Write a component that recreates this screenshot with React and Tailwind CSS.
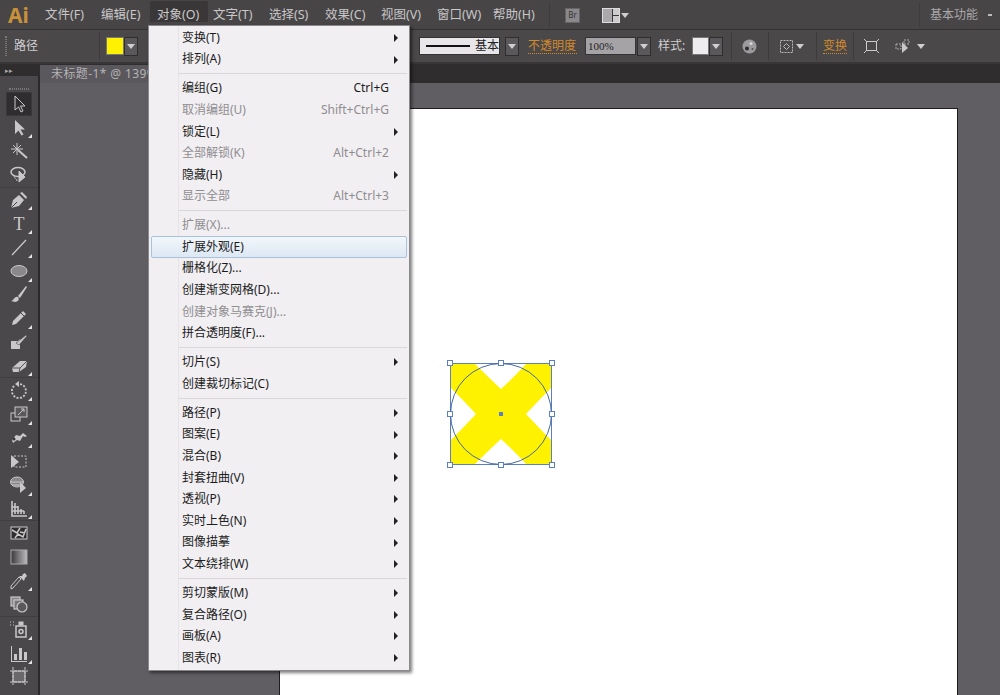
import React from "react";

const font = { fontFamily: '"Noto Sans", "Noto Sans CJK SC", sans-serif' };

const menuBar = ["文件(F)", "编辑(E)", "对象(O)", "文字(T)", "选择(S)", "效果(C)", "视图(V)", "窗口(W)", "帮助(H)"];

// groups of the object menu: [label, shortcut, disabled, submenu]
const groups = [
  [
    ["变换(T)", "", false, true],
    ["排列(A)", "", false, true],
  ],
  [
    ["编组(G)", "Ctrl+G"],
    ["取消编组(U)", "Shift+Ctrl+G", true],
    ["锁定(L)", "", false, true],
    ["全部解锁(K)", "Alt+Ctrl+2", true],
    ["隐藏(H)", "", false, true],
    ["显示全部", "Alt+Ctrl+3", true],
  ],
  [
    ["扩展(X)...", "", true],
    ["扩展外观(E)", "", false, false, true],
    ["栅格化(Z)..."],
    ["创建渐变网格(D)..."],
    ["创建对象马赛克(J)...", "", true],
    ["拼合透明度(F)..."],
  ],
  [
    ["切片(S)", "", false, true],
    ["创建裁切标记(C)"],
  ],
  [
    ["路径(P)", "", false, true],
    ["图案(E)", "", false, true],
    ["混合(B)", "", false, true],
    ["封套扭曲(V)", "", false, true],
    ["透视(P)", "", false, true],
    ["实时上色(N)", "", false, true],
    ["图像描摹", "", false, true],
    ["文本绕排(W)", "", false, true],
  ],
  [
    ["剪切蒙版(M)", "", false, true],
    ["复合路径(O)", "", false, true],
    ["画板(A)", "", false, true],
    ["图表(R)", "", false, true],
  ],
];

function Caret({ className = "" }) {
  return <span className={"block w-0 h-0 border-x-[4px] border-x-transparent border-t-[5px] border-t-[#d0cfd0] " + className} />;
}

function DropBtn({ className = "" }) {
  return (
    <span className={"flex items-center justify-center w-[14px] h-[19px] bg-[#5a585a] border border-[#2f2d2e] " + className}>
      <Caret />
    </span>
  );
}

function Sep({ className = "" }) {
  return <span className={"block w-px h-[28px] bg-[#3d3b3c] " + className} />;
}

function MenuRow({ label, shortcut, disabled, sub, hover }) {
  return (
    <div
      className={
        "relative flex items-center h-[21.6px] pl-[33px] pr-[20px] text-[12px] " +
        (disabled ? "text-[#8f8d90] " : "text-[#1c1c1c] ") +
        (hover ? "mx-[2px] !pl-[30px] !pr-[18px] rounded-[2px] border border-[#a9c2dc] bg-gradient-to-b from-[#f2f6fb] to-[#dde8f4]" : "")
      }
    >
      <span>{label}</span>
      {shortcut && <span className="ml-auto">{shortcut}</span>}
      {sub && <span className="absolute right-[11px] top-[7px] w-0 h-0 border-y-[4px] border-y-transparent border-l-[4px] border-l-[#222]" />}
    </div>
  );
}

function ObjectMenu() {
  return (
    <div className="absolute left-[148px] top-[25px] w-[262px] h-[646px] pt-[1px] bg-[#f1eff2] border border-[#8b898b] shadow-[2px_2px_3px_rgba(0,0,0,0.5)] z-10">
      <div className="absolute left-[29px] top-0 bottom-0 w-px bg-[#e6e4e7]" />
      {groups.map((g, i) => (
        <div key={i}>
          {i > 0 && <div className="ml-[30px] mr-[2px] my-[3.2px] h-px bg-[#d9d7da]" />}
          {g.map((r) => (
            <MenuRow key={r[0]} label={r[0]} shortcut={r[1]} disabled={r[2]} sub={r[3]} hover={r[4]} />
          ))}
        </div>
      ))}
    </div>
  );
}

const S = "#c9c7c9";
const tools = [
  [<path d="M6 2v14l3.5-3 2.500 5 2-1-2.500-5H16z" fill="none" stroke={S} />, 0, 1],
  [<path d="M6 2v14l3.500-3.500 3 5 2-1-3-5H16z" fill={S} />, 1],
  [<g stroke={S} fill="none"><path d="M9 9l9 8" strokeWidth="2" /><path d="M8 2v12M2 8h12M4 4l8 8M12 4l-8 8" /></g>, 0],
  [<g fill="none" stroke={S}><ellipse cx="9" cy="7" rx="7" ry="4.500" strokeWidth="1.500" /><path d="M5 10c0 4 3 3 3 6" /><path d="M10 6v11l6-5z" fill={S} /></g>, 0],
  [<g><path d="M2 18l2-8 6-5 5 5-5 6z" fill={S} /><path d="M2 18l6-6" stroke="#444" /><path d="M11 3l2-1 5 5-1 2z" fill={S} /></g>, 1],
  [<text x="10" y="17" textAnchor="middle" fontSize="18" fontFamily="Liberation Serif, serif" fill={S}>T</text>, 1],
  [<path d="M3 18L17 3" stroke={S} strokeWidth="1.300" />, 1],
  [<ellipse cx="10" cy="10" rx="8" ry="5.500" fill="#8a888b" stroke={S} />, 1],
  [<g fill={S}><path d="M9 12L17 2l1 1-7 11z" /><path d="M2 17c3 0 3-5 7-4 2 2 0 5-3 5z" /></g>, 0],
  [<g><path d="M3 17l1-4L14 3l3 3L7 16z" fill={S} /><path d="M12 5l3 3" stroke="#444" /></g>, 1],
  [<g fill={S}><path d="M2 9h7l2-2v10H2z" /><path d="M7 11l10-8 1 1-8 9z" stroke="#444" strokeWidth=".6" /></g>, 0],
  [<g><path d="M3 13l8-7h7l-1 6-7 5H4z" fill={S} /><path d="M3 13h8l7-7M11 13l-1 4" stroke="#555" fill="none" /></g>, 1],
  [<g fill="none" stroke={S} strokeWidth="1.800"><path d="M5 6a7 7 0 1 0 5-2" strokeDasharray="2 1.500" /><path d="M10 1v6l-4-3z" fill={S} stroke="none" /></g>, 1],
  [<g fill="none" stroke={S}><rect x="2" y="9" width="9" height="8" /><rect x="6" y="3" width="12" height="10" fill="#5a585b" /><path d="M9 11l6-6M12 5h3v3" /></g>, 1],
  [<g><path d="M4 16l-1-3 4-5 4 1 3-3 4 3-2 1-2-1-3 5-3-1z" fill={S} /><circle cx="5" cy="12" r="1.500" fill="#333" /></g>, 1],
  [<g fill="none" stroke={S}><rect x="5" y="5" width="12" height="11" strokeDasharray="2 1.500" /><path d="M2 4v13l8-6z" fill={S} stroke="none" /></g>, 0],
  [<g><ellipse cx="8" cy="7" rx="6.500" ry="5" fill="#8a888b" stroke={S} /><path d="M2 7h12M3 10h10" stroke={S} /><path d="M11 7v11l6-5z" fill={S} /></g>, 1],
  [<g fill="none" stroke={S} strokeWidth="1.600"><path d="M3 2v15h15" /><path d="M6 4v11M9 7v8M12 10v5M15 12v3M3 8h6M3 12h12" /></g>, 1],
  [<g><rect x="2" y="4" width="16" height="12" fill="#2f2d2e" stroke={S} /><path d="M3 7l5 3 3-5M6 15l3-4 5 3 3-8M11 9l5 1" stroke={S} strokeWidth="1.500" fill="none" /></g>, 0],
  [<g><defs><linearGradient id="gr" x1="0" x2="1"><stop stopColor="#3a383a" /><stop offset="1" stopColor="#bdbbbd" /></linearGradient></defs><rect x="2" y="3" width="16" height="14" fill="url(#gr)" stroke="#aaa" /></g>, 0],
  [<g><path d="M2 18l2-1 8-9-2-2-8 9z" fill="none" stroke={S} /><path d="M10 5l5 5 1-3 2-2-2-3-2 1-1 2z" fill={S} /></g>, 1],
  [<g fill="none" stroke={S} strokeWidth="1.200"><rect x="2" y="3" width="9" height="9" fill="#8a888b" /><rect x="5" y="6" width="9" height="9" fill="#77757a" /><circle cx="13" cy="13" r="5" fill="#5a585b" /></g>, 0],
  [<g fill="none" stroke={S}><rect x="7" y="7" width="10" height="11" strokeWidth="1.500" /><rect x="10" y="3" width="4" height="3" fill={S} /><circle cx="12" cy="12.500" r="2" strokeWidth="1.500" /><path d="M1 3h1M4 3h1M1 6h1M4 6h1" /></g>, 1],
  [<g fill={S}><path d="M2 3h1v15h15v1H2z" /><rect x="5" y="11" width="3" height="6" /><rect x="10" y="5" width="3" height="12" /><rect x="15" y="9" width="3" height="8" /></g>, 1],
  [<g><rect x="4" y="5" width="12" height="11" fill="#6a686b" stroke={S} /><path d="M1 5h18M1 16h18M4 1v18M16 1v18" stroke={S} strokeDasharray="3 1" /></g>, 0],
];

const breaks = new Set([4, 12, 18, 22]);

function ToolBar() {
  return (
    <div className="relative flex-1 min-h-0 bg-[#4a484b] border-r-[2px] border-[#2b292a] pt-[12px] overflow-hidden">
      <div className="mx-[9px] mb-[2px] h-[2px] border-y border-dotted border-[#777]" />
      {tools.map(([icon, corner, active], i) => (
        <div key={i} className={breaks.has(i) ? "border-t border-[#403e41]" : ""}>
          <div className={"relative mx-[6px] flex items-center justify-center h-[23.7px] " + (active ? "bg-[#2f2d2f] border border-[#3a383a]" : "")}>
            <svg width="20" height="20" viewBox="0 0 20 20">{icon}</svg>
            {corner === 1 && <span className="absolute right-0 bottom-[1px] w-0 h-0 border-l-[4px] border-l-transparent border-b-[4px] border-b-[#e4e2e4]" />}
          </div>
        </div>
      ))}
    </div>
  );
}

function Handle({ className }) {
  return <span className={"absolute w-[6px] h-[6px] bg-white border border-[#5b7fc0] " + className} />;
}

function Art() {
  return (
    <div className="absolute left-[170px] top-[254px] w-[102px] h-[102px]">
      <svg width="102" height="102" viewBox="0 0 102 102" className="block">
        <rect x="0.5" y="0.5" width="101" height="101" fill="#fff200" />
        <path d="M24 0Q38 14 51 26 64 14 77 0ZM102 24Q88 38 76 51 88 64 102 78ZM24 102Q38 88 51 76 64 88 77 102ZM0 24Q14 38 26 51 14 64 0 78Z" fill="#fff" />
        <rect x="0.5" y="0.5" width="101" height="101" fill="none" stroke="#5b7fc0" />
        <circle cx="51" cy="51" r="50.500" fill="none" stroke="#45689f" />
        <rect x="49" y="49" width="4" height="4" fill="#5b7fc0" />
      </svg>
      <Handle className="-left-[3px] -top-[3px]" />
      <Handle className="left-[48px] -top-[3px]" />
      <Handle className="-right-[3px] -top-[3px]" />
      <Handle className="-left-[3px] top-[48px]" />
      <Handle className="-right-[3px] top-[48px]" />
      <Handle className="-left-[3px] -bottom-[3px]" />
      <Handle className="left-[48px] -bottom-[3px]" />
      <Handle className="-right-[3px] -bottom-[3px]" />
    </div>
  );
}

export default function App() {
  return (
    <div style={font} className="relative flex flex-col w-[1000px] h-[695px] overflow-hidden bg-[#605e62] text-[12px] text-[#c9c7c9]">
      {/* menu bar */}
      <div className="flex items-center h-[30px] shrink-0 pt-[1px] bg-[#474546] border-b border-[#343233]">
        <span className="ml-[8px] w-[37px] text-[21px] leading-none font-bold text-[#c8913a]">Ai</span>
        {menuBar.map((t) => (
          <span key={t} className="relative w-[56px] text-[12.500px]">
            {t === "对象(O)" && <span className="absolute -left-[7px] -top-[5px] w-[58px] h-[21px] bg-[#393738] rounded-t-[2px]" />}
            <span className="relative">{t}</span>
          </span>
        ))}
        <Sep className="!h-[24px]" />
        <span className="ml-[15px] flex items-center justify-center w-[15px] h-[15px] bg-[#8a888a] border border-[#666] text-[8px] text-[#333]">Br</span>
        <span className="ml-[22px] flex w-[18px] h-[15px] border border-[#ddd] bg-[#3a383a] gap-px">
          <span className="w-[9px] bg-[#aaa8aa]" />
          <span className="flex-1 flex flex-col gap-px"><span className="flex-1 bg-[#ccc]" /><span className="flex-1 bg-[#ccc]" /></span>
        </span>
        <Caret className="ml-[1px]" />
        <Sep className="ml-[290px] !h-[24px]" />
        <span className="ml-[10px] text-[#a9a7a9]">基本功能</span>
        <span className="ml-[10px] block w-[4px] h-[3px] border-t-[2px] border-[#bbb]" />
      </div>

      {/* control bar */}
      <div className="flex items-center h-[34px] shrink-0 bg-[#4a4849] border-b-[2px] border-[#383637]">
        <span className="ml-[5px] w-[2px] h-[20px] border-x border-dotted border-[#777]" />
        <span className="ml-[7px] w-[24px] text-[#d0ced0]">路径</span>
        <Sep className="ml-[61px]" />
        <span className="ml-[6px] w-[18px] h-[18px] bg-[#fff200] border border-[#777]" />
        <DropBtn />
        <span className="ml-[281px] flex items-center w-[81px] h-[18px] bg-[#e8e6e9] border border-[#333] text-[#222]">
          <span className="ml-[6px] w-[44px] h-[2px] bg-[#111]" />
          <span className="ml-[5px]">基本</span>
        </span>
        <DropBtn className="ml-[5px]" />
        <span className="ml-[9px] w-[49px] whitespace-nowrap text-[#d28a2c] border-b border-dotted border-[#d28a2c] leading-[14px]">不透明度</span>
        <span className="ml-[8px] flex items-center w-[51px] h-[18px] bg-[#a5a3a5] border border-[#333] pl-[2px] text-[11px] text-[#222]" style={{ fontFamily: "Liberation Serif, serif" }}>100%</span>
        <DropBtn className="ml-[1px]" />
        <span className="ml-[7px] w-[28px] text-[#d0ced0]">样式:</span>
        <span className="ml-[6px] w-[17px] h-[18px] bg-[#eeecef] border border-[#777]" />
        <DropBtn />
        <Sep className="ml-[8px]" />
        <svg className="ml-[10px]" width="15" height="15" viewBox="0 0 15 15">
          <circle cx="7.500" cy="7.500" r="7" fill="#9c9a9c" />
          <circle cx="5" cy="9.500" r="2" fill="#2f2d2e" />
          <circle cx="9" cy="4.500" r="1.500" fill="#d8d6d8" />
          <circle cx="10.500" cy="10" r="1" fill="#555" />
        </svg>
        <Sep className="ml-[11px]" />
        <svg className="ml-[11px]" width="13" height="13" viewBox="0 0 13 13" fill="none" stroke="#bbb">
          <rect x=".5" y=".5" width="12" height="12" strokeDasharray="2 1" />
          <path d="M6.500 3.500l3 3-3 3-3-3z" />
        </svg>
        <Caret className="ml-[3px]" />
        <Sep className="ml-[12px]" />
        <span className="ml-[6px] w-[24px] text-[#d28a2c] border-b border-dotted border-[#d28a2c] leading-[14px]">变换</span>
        <Sep className="ml-[6px]" />
        <svg className="ml-[10px]" width="15" height="14" viewBox="0 0 15 14" fill="none" stroke="#ccc">
          <rect x="2.500" y="2.500" width="10" height="9" />
          <path d="M0 0l3 3M15 0l-3 3M0 14l3-3M15 14l-3-3" />
        </svg>
        <svg className="ml-[16px]" width="16" height="16" viewBox="0 0 16 16">
          <path d="M1 6h5v5H1zM9 2h5v4H9z" fill="none" stroke="#aaa" strokeDasharray="2 1" />
          <path d="M7 4v11l6-5z" fill="#c9c7c9" />
        </svg>
        <Caret className="ml-[6px]" />
      </div>

      {/* workspace */}
      <div className="flex flex-1 min-h-0">
        <div className="flex flex-col shrink-0 w-[40px]">
          <div className="flex items-center h-[12px] shrink-0 pl-[5px] bg-[#2f2d2e] text-[7px] leading-none text-[#aaa]">▸▸</div>
          <ToolBar />
        </div>
        <div className="flex flex-col flex-1 min-w-0">
          <div className="flex items-end h-[19px] shrink-0 bg-[#2f2d2e]">
            <span className="flex items-center w-[130px] h-[18px] pl-[11px] bg-[#5a585c] text-[#b4b2b5] tracking-[0.4px]">未标题-1* @ 139%</span>
          </div>
          <div className="flex-1 min-h-0 pl-[239px] pt-[25px]">
            <div className="relative w-[679px] h-full bg-white border border-[#1f1d1e] border-b-0">
              <Art />
            </div>
          </div>
        </div>
      </div>

      <ObjectMenu />
    </div>
  );
}
